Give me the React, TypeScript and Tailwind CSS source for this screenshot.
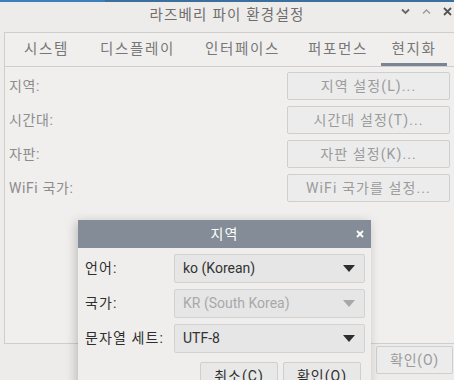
const font = "font-['Roboto','Noto_Sans_CJK_KR',sans-serif]";

const Arrow = ({ dim }: { dim?: boolean }) => (
  <svg width="12" height="7" viewBox="0 0 12 7">
    <path d="M0 0H12L6 7Z" fill={dim ? "#a8a8a8" : "#2e2e2e"} />
  </svg>
);

const Combo = ({ text, dim }: { text: string; dim?: boolean }) => (
  <div className="flex-1 h-[29px] flex items-center justify-between pl-[8px] pr-[9px] bg-[#e6e6e6] border border-[#d2d2d2] rounded-[2px]">
    <span className={dim ? "text-[#a9a9a9]" : "text-[#333333]"}>{text}</span>
    <Arrow dim={dim} />
  </div>
);

export default function App() {
  const tabs = ["시스템", "디스플레이", "인터페이스", "퍼포먼스", "현지화"];
  const rows = [
    ["지역:", "지역 설정(L)..."],
    ["시간대:", "시간대 설정(T)..."],
    ["자판:", "자판 설정(K)..."],
    ["WiFi 국가:", "WiFi 국가를 설정..."],
  ];

  return (
    <div className={`relative w-[454px] h-[380px] overflow-hidden bg-[#edecea] text-[14px] ${font}`}>
      {/* top edge of the desktop panel */}
      <div className="flex h-[2px]">
        <div className="w-[105px] bg-[#3d7ebf]" />
        <div className="flex-1 bg-[#3a6f9e]" />
      </div>

      {/* title bar */}
      <div className="relative h-[30px] flex items-center justify-center text-[#6e6e6e] text-[14.5px] tracking-[1.2px]">
        <span className="-mt-[2px]">라즈베리 파이 환경설정</span>
        <div className="absolute right-[2px] top-[5px] flex items-center gap-[12px]">
          <svg width="9" height="7" viewBox="0 0 9 7">
            <path d="M1 1.5L4.5 5L8 1.5" stroke="#666" strokeWidth="1.8" fill="none" />
          </svg>
          <svg width="9" height="7" viewBox="0 0 9 7">
            <path d="M1 5.5L4.5 2L8 5.5" stroke="#9a9a9a" strokeWidth="1.4" fill="none" />
          </svg>
          <svg width="9" height="9" viewBox="0 0 9 9">
            <path d="M1 1L8 8M8 1L1 8" stroke="#555" strokeWidth="1.8" />
          </svg>
        </div>
      </div>

      {/* notebook */}
      <div className="ml-[4px] w-[460px] h-[312px] border border-[#cfcecc] bg-[#f0efee]">
        <div className="flex h-[34px] border-b border-[#cfcecc] text-[#777777] text-[14.5px] tracking-[1.7px]">
          {tabs.map((t, i) => (
            <div
              key={t}
              className={`flex items-center justify-center ${
                i === 0 ? "w-[80px] pl-[3px]" : i === 1 ? "w-[105px]" : i === 2 ? "w-[105px]" : i === 3 ? "w-[86px]" : "w-[66px]"
              } ${i === 4 ? "border-b-[3px] border-[#7a8593] pt-[3px]" : ""}`}
            >
              {t}
            </div>
          ))}
        </div>
        <div className="flex flex-col gap-[6px] pt-[5px] pl-[4px] text-[#8c8c8c] tracking-[0.6px]">
          {rows.map(([l, b]) => (
            <div key={l} className="flex items-center h-[28px]">
              <span className="w-[278px]">{l}</span>
              <div className="w-[163px] h-[28px] flex items-center justify-center border border-[#cfcfcf] bg-[#ececec] rounded-[2px] text-[#9b9b9b] tracking-[1.1px]">
                {b}
              </div>
            </div>
          ))}
        </div>
      </div>

      {/* main window buttons */}
      <div className="flex justify-end pt-[2px] pr-[1px]">
        <div className="w-[77px] h-[28px] flex items-center justify-center border border-[#cfcfcf] bg-[#ececec] rounded-[2px] text-[#9b9b9b] tracking-[0.8px]">
          확인(O)
        </div>
      </div>

      {/* locale dialog */}
      <div className="absolute left-[78px] top-[220px] w-[293px] h-[170px] bg-[#efeeed] shadow-[-2px_2px_10px_rgba(0,0,0,0.22)]">
        <div className="relative h-[28px] bg-[#838c97] flex items-center justify-center text-white text-[14px] tracking-[1.2px]">
          지역
          <svg className="absolute right-[7px] top-[10px]" width="8" height="8" viewBox="0 0 8 8">
            <path d="M1 1L7 7M7 1L1 7" stroke="#fff" strokeWidth="1.8" />
          </svg>
        </div>
        <div className="flex flex-col gap-[6px] pt-[6px] pl-[7px] pr-[6px] text-[#2e2e2e]">
          <div className="flex items-center">
            <span className="w-[89px] tracking-[1.1px]">언어:</span>
            <Combo text="ko (Korean)" />
          </div>
          <div className="flex items-center">
            <span className="w-[89px] tracking-[1.1px]">국가:</span>
            <Combo text="KR (South Korea)" dim />
          </div>
          <div className="flex items-center">
            <span className="w-[89px] tracking-[1.1px]">문자열 세트:</span>
            <Combo text="UTF-8" />
          </div>
          <div className="flex justify-end gap-[5px] pt-[3px] pr-[4px] tracking-[1px]">
            <div className="w-[78px] h-[29px] flex items-center justify-center border border-[#cfcfcf] bg-[#e8e8e8] rounded-[2px]">
              취소(C)
            </div>
            <div className="w-[78px] h-[29px] flex items-center justify-center border border-[#cfcfcf] bg-[#e8e8e8] rounded-[2px]">
              확인(O)
            </div>
          </div>
        </div>
      </div>
    </div>
  );
}
